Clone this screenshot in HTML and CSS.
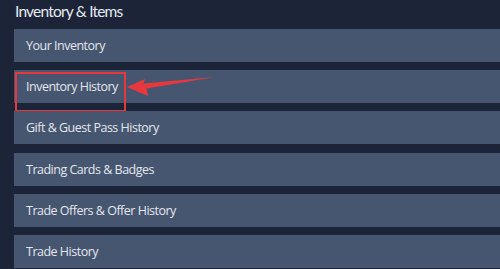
FILE: index.html
```html
<!DOCTYPE html>
<html>
<head>
<meta charset="utf-8">
<link rel="stylesheet" href="styles.css">
</head>
<body>
<div class="page">
  <h1 class="title">Inventory &amp; Items</h1>
  <ul class="list">
    <li class="row">Your Inventory</li>
    <li class="row highlighted">Inventory History
      <span class="mark"></span>
      <svg class="arrow" width="100" height="30" viewBox="0 0 100 30">
        <polygon points="0,11 18,3 16.5,7.5 88,1 19.5,12.5 21,20" fill="#e8383d"/>
      </svg>
    </li>
    <li class="row">Gift &amp; Guest Pass History</li>
    <li class="row">Trading Cards &amp; Badges</li>
    <li class="row">Trade Offers &amp; Offer History</li>
    <li class="row">Trade History</li>
  </ul>
</div>
</body>
</html>
```
FILE: styles.css
```css
html, body {
  margin: 0;
  padding: 0;
  background: #1b2537;
  overflow: hidden;
}
.page {
  width: 500px;
  height: 269px;
  padding-left: 14px;
  box-sizing: border-box;
  font-family: "Open Sans", "Noto Sans", sans-serif;
}
.title {
  margin: 0;
  padding: 0 0 0 1px;
  height: 29px;
  box-sizing: border-box;
  font-family: Lato, "Open Sans", sans-serif;
  font-size: 15.5px;
  letter-spacing: -0.8px;
  font-weight: 400;
  color: #e4e9f0;
  line-height: 23px;
}
.list {
  list-style: none;
  margin: 0;
  padding: 0;
  display: flex;
  flex-direction: column;
  gap: 8.2px;
}
.row {
  position: relative;
  height: 33px;
  background: #475670;
  color: #e1e6ed;
  font-size: 12.5px;
  letter-spacing: -0.5px;
  line-height: 33px;
  padding-left: 12px;
}
.mark {
  position: absolute;
  left: 1px;
  top: 2px;
  width: 111px;
  height: 40px;
  border: 2px solid #e8383d;
  box-sizing: border-box;
}
.arrow {
  position: absolute;
  left: 113px;
  top: 6px;
}
```
